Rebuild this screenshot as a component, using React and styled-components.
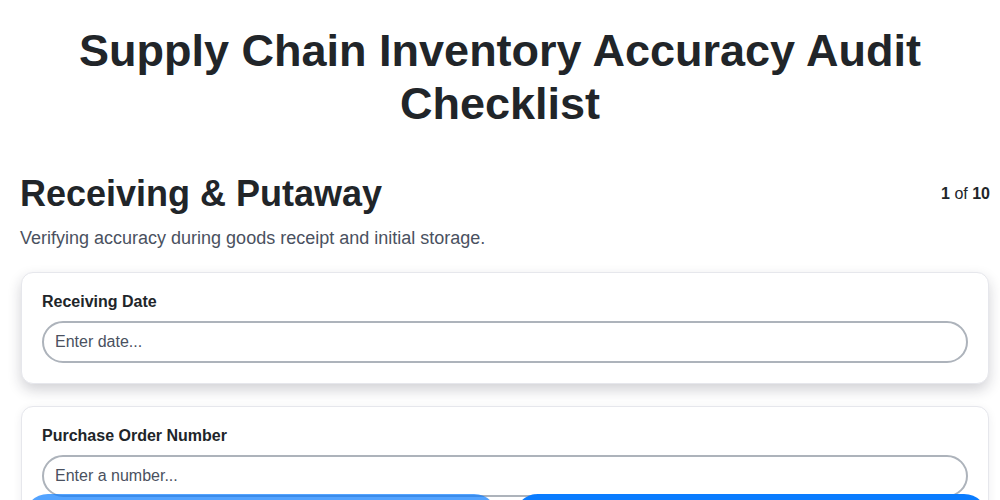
import styled, { createGlobalStyle } from "styled-components";

const GlobalStyle = createGlobalStyle`
  body {
    margin: 0;
    background: #fff;
    font-family: "Liberation Sans", Arial, sans-serif;
    color: #212529;
  }
`;

const fields = [
  { label: "Receiving Date", placeholder: "Enter date...", active: true },
  { label: "Purchase Order Number", placeholder: "Enter a number..." },
  { label: "Supplier Name", placeholder: "Enter text..." },
];

const App = () => {
  return (
    <Page>
      <GlobalStyle />
      <Title>Supply Chain Inventory Accuracy Audit Checklist</Title>
      <SectionHead>
        <SectionTitle>Receiving &amp; Putaway</SectionTitle>
        <Counter>
          <b>1</b> of <b>10</b>
        </Counter>
      </SectionHead>
      <Description>
        Verifying accuracy during goods receipt and initial storage.
      </Description>
      {fields.map((f) => (
        <Card key={f.label} $active={f.active}>
          <Label>{f.label}</Label>
          <Input placeholder={f.placeholder} />
        </Card>
      ))}
      <Nav>
        <NavButton disabled>Previous</NavButton>
        <NavButton>Next</NavButton>
      </Nav>
    </Page>
  );
};

export default App;

const Page = styled.div`
  padding: 0 10px 80px 20px;
`;

const Title = styled.h1`
  margin: 0;
  padding: 24px 55px 0 45px;
  text-align: center;
  font-size: 45px;
  line-height: 53px;
  font-weight: 700;
  color: #212529;
`;

const SectionHead = styled.div`
  display: flex;
  justify-content: space-between;
  align-items: flex-start;
  margin-top: 42px;
`;

const SectionTitle = styled.h2`
  margin: 0;
  font-size: 36px;
  line-height: 44px;
  font-weight: 700;
`;

const Counter = styled.div`
  font-size: 16px;
  line-height: 20px;
  padding-top: 12px;
  color: #212529;
`;

const Description = styled.p`
  margin: 11px 0 23px;
  font-size: 18px;
  line-height: 22px;
  color: #4a5160;
`;

const Card = styled.div`
  margin: 0 1px 22px 1px;
  padding: 20px;
  background: #fff;
  border: 1px solid #e6e7ec;
  border-radius: 12px;
  box-shadow: ${(p) =>
    p.$active
      ? "0 6px 14px rgba(30, 30, 50, 0.2)"
      : "0 2px 10px rgba(30, 30, 50, 0.07)"};
`;

const Label = styled.label`
  display: block;
  font-size: 16px;
  line-height: 18px;
  font-weight: 700;
  margin-bottom: 10px;
  color: #212529;
`;

const Input = styled.input`
  display: block;
  box-sizing: border-box;
  width: 100%;
  height: 42px;
  padding: 0 11px;
  border: 2px solid #adb3bb;
  border-radius: 21px;
  font-family: "Liberation Sans", Arial, sans-serif;
  font-size: 16px;
  color: #212529;
  outline: none;
  &::placeholder {
    color: #4a5160;
  }
`;

const Nav = styled.div`
  position: fixed;
  left: 24px;
  right: 12px;
  top: calc(100vh - 6px);
  display: flex;
  gap: 16px;
`;

const NavButton = styled.button`
  flex: 1;
  height: 48px;
  border: none;
  border-radius: 24px;
  background: #0a7cff;
  color: #fff;
  font-family: "Liberation Sans", Arial, sans-serif;
  font-size: 16px;
  font-weight: 700;
  &:disabled {
    opacity: 0.7;
  }
`;
